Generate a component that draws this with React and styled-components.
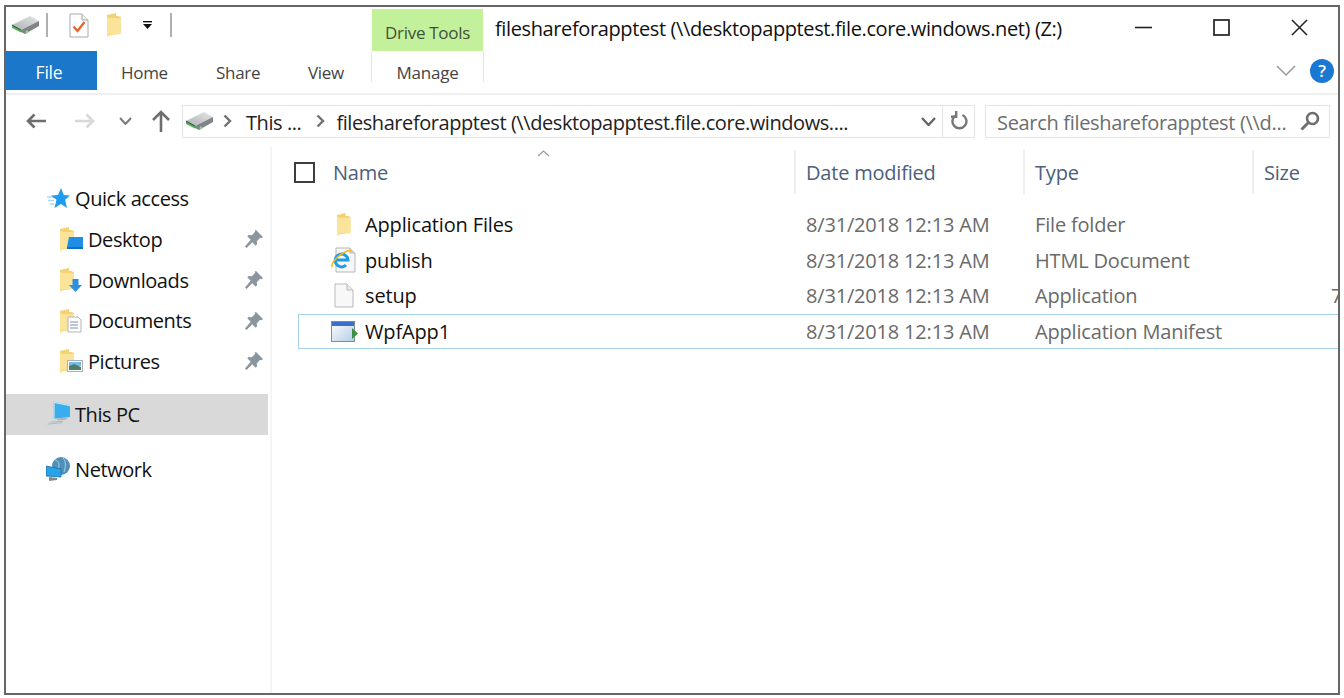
import React from 'react';
import styled, { createGlobalStyle } from 'styled-components';

const UI_FONT = '"Open Sans", "Noto Sans", "Liberation Sans", sans-serif';

const GlobalStyle = createGlobalStyle`
  html, body {
    margin: 0;
    padding: 0;
    background: #fff;
  }
  body {
    font-family: ${UI_FONT};
    overflow: hidden;
  }
`;

const Page = styled.div`
  width: 1344px;
  height: 698px;
  box-sizing: border-box;
  padding: 5px 4px 3px 4px;
  background: #fff;
`;

const Window = styled.div`
  height: 100%;
  box-sizing: border-box;
  border: 2px solid #666;
  display: flex;
  flex-direction: column;
  overflow: hidden;
  background: #fff;
`;

const TitleBar = styled.div`
  height: 44px;
  display: flex;
  flex-shrink: 0;
`;

const Qat = styled.div`
  width: 366px;
  display: flex;
  align-items: center;
  padding: 0 0 8px 6px;
  box-sizing: border-box;
`;

const QatItem = styled.span`
  display: flex;
  margin-left: ${(p) => p.$ml || 0}px;
`;

const QatSep = styled.span`
  width: 2px;
  height: 24px;
  background: #b0b0b0;
  margin-left: ${(p) => p.$ml || 0}px;
`;

const DriveToolsLabel = styled.div`
  width: 111px;
  margin-top: 2px;
  background: #c3f09b;
  color: #3f5139;
  font-size: 17px;
  letter-spacing: -0.3px;
  display: flex;
  align-items: center;
  justify-content: center;
  padding-top: 5px;
  box-sizing: border-box;
`;

const TitleText = styled.div`
  flex: 1;
  padding: 8px 0 0 12px;
  font-size: 20px;
  letter-spacing: -0.38px;
  color: #111;
  white-space: nowrap;
`;

const WinControls = styled.div`
  display: flex;
`;

const WinButton = styled.div`
  width: 78px;
  display: flex;
  align-items: center;
  justify-content: center;
  padding-bottom: 4px;
`;

const Ribbon = styled.div`
  height: 44px;
  box-sizing: border-box;
  border-bottom: 2px solid #f0f0f0;
  display: flex;
  align-items: flex-start;
  flex-shrink: 0;
`;

const FileTab = styled.div`
  width: 91px;
  height: 39px;
  box-sizing: border-box;
  padding: 2px 5px 0 0;
  background: #1a77c9;
  color: #fff;
  font-size: 17.5px;
  letter-spacing: -0.2px;
  display: flex;
  align-items: center;
  justify-content: center;
`;

const RibbonTab = styled.div`
  width: ${(p) => p.$w}px;
  height: 39px;
  box-sizing: border-box;
  padding: 3px 0 0 24px;
  color: #444;
  font-size: 17px;
  letter-spacing: -0.3px;
  display: flex;
  align-items: center;
`;

const ManageTab = styled.div`
  width: 111px;
  height: 31px;
  border-left: 1px solid #e6e6e6;
  border-right: 1px solid #e6e6e6;
  margin-left: -1px;
  color: #444;
  font-size: 17px;
  letter-spacing: -0.25px;
  text-align: center;
  line-height: 44px;
`;

const RibbonRight = styled.div`
  margin-left: auto;
  height: 39px;
  display: flex;
  align-items: center;
  gap: 14px;
  padding-right: 4px;
`;

const HelpBadge = styled.div`
  width: 24px;
  height: 24px;
  border-radius: 50%;
  background: #1a77d2;
  color: #fff;
  font-size: 17px;
  font-weight: 600;
  line-height: 24px;
  text-align: center;
`;

const NavBar = styled.div`
  height: 52px;
  display: flex;
  align-items: center;
  flex-shrink: 0;
`;

const NavButton = styled.span`
  display: flex;
  margin-left: ${(p) => p.$ml || 0}px;
`;

const AddressBox = styled.div`
  width: 793px;
  height: 33px;
  margin-left: 11px;
  box-sizing: border-box;
  border: 1px solid #e4e4e4;
  display: flex;
  align-items: center;
  padding-left: 3px;
  font-size: 20px;
  letter-spacing: -0.43px;
  color: #222;
  white-space: nowrap;
`;

const Crumb = styled.span`
  display: flex;
  margin-left: ${(p) => p.$ml || 0}px;
  padding-top: ${(p) => (p.$text ? 2 : 0)}px;
`;

const AddressEnd = styled.div`
  margin-left: auto;
  display: flex;
  align-items: center;
  height: 100%;
`;

const RefreshCell = styled.div`
  width: 31px;
  height: 100%;
  margin-left: 6px;
  border-left: 1px solid #e4e4e4;
  display: flex;
  align-items: center;
  justify-content: center;
`;

const SearchBox = styled.div`
  width: 345px;
  height: 33px;
  margin-left: 10px;
  box-sizing: border-box;
  border: 1px solid #e4e4e4;
  display: flex;
  align-items: center;
  justify-content: space-between;
  padding: 0 9px 0 11px;
  font-size: 20px;
  letter-spacing: -0.32px;
  color: #6d6d6d;
  white-space: nowrap;
`;

const SearchHint = styled.span`
  padding-top: 2px;
`;

const Body = styled.div`
  flex: 1;
  display: flex;
  min-height: 0;
`;

const Sidebar = styled.nav`
  width: 266px;
  flex-shrink: 0;
  box-sizing: border-box;
  border-right: 2px solid #f5f5f5;
  padding-top: 31.6px;
`;

const NavRow = styled.div`
  height: 40.6px;
  width: 262px;
  margin-top: ${(p) => p.$mt || 0}px;
  display: flex;
  align-items: center;
  box-sizing: border-box;
  padding-left: ${(p) => (p.$child ? 49 : 38)}px;
  padding-right: 5px;
  background: ${(p) => (p.$selected ? '#d9d9d9' : 'transparent')};
  font-size: 20px;
  letter-spacing: -0.42px;
  color: #111;
`;

const NavIcon = styled.span`
  width: ${(p) => (p.$child ? 33 : 31)}px;
  padding-right: ${(p) => (p.$child ? 5 : 5)}px;
  box-sizing: border-box;
  display: flex;
  justify-content: flex-end;
  flex-shrink: 0;
`;

const PinSlot = styled.span`
  margin-left: auto;
  display: flex;
`;

const Content = styled.main`
  flex: 1;
  min-width: 0;
  padding-top: 3px;
`;

const ColumnHeader = styled.div`
  height: 44px;
  display: grid;
  grid-template-columns: 522px 229px 229px 1fr;
  position: relative;
`;

const SortCaret = styled.span`
  position: absolute;
  left: 265px;
  top: 0;
  display: flex;
`;

const NameHead = styled.div`
  display: flex;
  align-items: center;
  padding-left: 22px;
  gap: 18px;
  color: #4c607a;
  font-size: 20px;
  letter-spacing: -0.2px;
`;

const HeadCheck = styled.span`
  width: 21px;
  height: 21px;
  box-sizing: border-box;
  border: 2px solid #3d3d3d;
`;

const HeadCell = styled.div`
  border-left: 2px solid #efefef;
  padding: 1px 0 0 10px;
  display: flex;
  align-items: center;
  color: #4c607a;
  font-size: 20px;
  letter-spacing: -0.2px;
  white-space: nowrap;
`;

const FileList = styled.div`
  margin-top: 12.700px;
  margin-left: 26px;
`;

const FileRow = styled.div`
  height: 35.7px;
  box-sizing: border-box;
  display: grid;
  grid-template-columns: 496px 229px 229px 1fr;
  align-items: center;
  border: 1px solid ${(p) => (p.$focused ? '#a8d3ef' : 'transparent')};
  border-right: none;
  white-space: nowrap;
`;

const NameCell = styled.div`
  display: flex;
  align-items: center;
  font-size: 20px;
  letter-spacing: -0.15px;
  color: #111;
`;

const FileIconSlot = styled.span`
  width: 66px;
  padding: 0 7px 0 31px;
  box-sizing: border-box;
  display: flex;
  justify-content: center;
  flex-shrink: 0;
`;

const MetaCell = styled.div`
  padding-left: 11px;
  font-size: 20px;
  letter-spacing: -0.18px;
  color: #6a6a6a;
`;

const SizeCell = styled.div`
  padding-left: 78px;
  font-size: 20px;
  color: #6a6a6a;
`;

/* ---- drawings ---- */

const DriveIcon = () => (
  <svg width="27" height="18" viewBox="0 0 27 18">
    <defs>
      <linearGradient id="driveTop" x1="0" y1="1" x2="1" y2="0">
        <stop offset="0" stopColor="#aeb2b5" />
        <stop offset="1" stopColor="#e4e5e6" />
      </linearGradient>
    </defs>
    <path d="M0 9 18 0l9 5-18 9z" fill="url(#driveTop)" />
    <path d="M9 14 27 5v5L13 18l-4-2z" fill="#7f8488" />
    <path d="M0 9l9 5v2.5L0 12z" fill="#4fb356" />
    <path d="M0 9l9 5" stroke="#3a3f42" strokeWidth="1" />
    <circle cx="15" cy="16" r="1.4" fill="#8bd88a" />
  </svg>
);

const TaskIcon = () => (
  <svg width="20" height="25" viewBox="0 0 20 25">
    <path d="M1 1h12l6 6v17H1z" fill="#fff" stroke="#a9a9a9" />
    <path d="M13 1v6h6" fill="#eee" stroke="#a9a9a9" />
    <path d="M4.5 13.5l4 4.5 7-9" fill="none" stroke="#e8622a" strokeWidth="2.2" />
  </svg>
);

const FolderShape = () => (
  <>
    <path d="M0 2 9 0v3h2l3 1v17l-11 1-3 2z" fill="#f2d272" />
    <path d="M3 5h11v16H3l-3 3V4z" fill="#fbe49a" />
  </>
);

const FolderIcon = ({ h = 24 }) => (
  <svg width={h * 0.65} height={h} viewBox="0 0 15.6 24">
    <FolderShape />
  </svg>
);

const QatDropIcon = () => (
  <svg width="11" height="8" viewBox="0 0 11 8">
    <path d="M1 .7h9" stroke="#111" strokeWidth="1.4" />
    <path d="M1 3h9L5.5 8z" fill="#111" />
  </svg>
);

const MinimizeIcon = () => (
  <svg width="17" height="3" viewBox="0 0 17 3">
    <path d="M0 1.5h17" stroke="#222" strokeWidth="1.6" />
  </svg>
);

const MaximizeIcon = () => (
  <svg width="17" height="17" viewBox="0 0 17 17">
    <rect x="1" y="1" width="15" height="15" fill="none" stroke="#222" strokeWidth="1.7" />
  </svg>
);

const CloseIcon = () => (
  <svg width="17" height="17" viewBox="0 0 17 17">
    <path d="M1 1l15 15M16 1 1 16" stroke="#222" strokeWidth="1.5" />
  </svg>
);

const Chevron = ({ w, h, color, sw = 2, up }) => (
  <svg width={w} height={h} viewBox={`0 0 ${w} ${h}`}>
    <path
      d={up ? `M1 ${h - 1}L${w / 2} 1L${w - 1} ${h - 1}` : `M1 1L${w / 2} ${h - 1}L${w - 1} 1`}
      fill="none"
      stroke={color}
      strokeWidth={sw}
    />
  </svg>
);

const CrumbArrow = () => (
  <svg width="9" height="14" viewBox="0 0 9 14">
    <path d="M1.5 1.5 7 7l-5.5 5.5" fill="none" stroke="#707070" strokeWidth="2.4" />
  </svg>
);

const HorizArrow = ({ color, flip }) => (
  <svg width="20" height="16" viewBox="0 0 20 16" style={flip ? { transform: 'scaleX(-1)' } : undefined}>
    <path d="M20 8H2M8.5 1.5 2 8l6.5 6.5" fill="none" stroke={color} strokeWidth="2.6" />
  </svg>
);

const UpArrow = () => (
  <svg width="20" height="22" viewBox="0 0 20 22">
    <path d="M10 22V2M2 10l8-8 8 8" fill="none" stroke="#6e6e6e" strokeWidth="2.6" />
  </svg>
);

const RefreshIcon = () => (
  <svg width="18" height="20" viewBox="0 0 18 20">
    <path d="M6 4.2a7 7 0 1 0 6.5-.2" fill="none" stroke="#777" strokeWidth="2.4" />
    <path d="M5 0h2.4v7H1V4.6h4z" fill="#777" />
  </svg>
);

const SearchIcon = () => (
  <svg width="20" height="20" viewBox="0 0 20 20">
    <circle cx="12.5" cy="7.5" r="5.5" fill="none" stroke="#6e6e6e" strokeWidth="2.6" />
    <path d="M8.5 11.5 1.5 18.5" stroke="#6e6e6e" strokeWidth="3" />
  </svg>
);

const StarIcon = () => (
  <svg width="23" height="22" viewBox="0 0 23 22">
    <path d="M0 9h7M1 12.500h6M3 16h4" stroke="#a9d9fa" strokeWidth="1.3" />
    <path d="M14 0l2.800 7 6.200.5-4.900 4.300L20 20l-6-4-6.500 4 2-8.200L4 7.500 11 7z" fill="#1f9bf2" />
  </svg>
);

const PinIcon = () => (
  <svg width="18" height="18" viewBox="0 0 18 18">
    <path d="M11 0l7 7-1.600 1.200-1.200-.4-3.400 3.400.3 3.100-1.400 1.400-3.400-3.400L1.500 18 0 16.500l5.700-6.800L2.300 6.300l1.400-1.400 3.100.3 3.400-3.400-.4-1.200z" fill="#8b959d" />
  </svg>
);

const FolderOverlay = ({ children }) => (
  <svg width="23" height="24" viewBox="0 0 23 24">
    <FolderShape />
    {children}
  </svg>
);

const DesktopFolder = () => (
  <FolderOverlay>
    <path d="M9 10h14v10H7z" fill="#1f8fe6" />
    <path d="M7 20h16v2H7z" fill="#0f6fc0" />
  </FolderOverlay>
);

const DownloadsFolder = () => (
  <FolderOverlay>
    <path d="M12.500 11h6v6h3.500l-6.500 7L9 17h3.500z" fill="#2e8fe0" />
  </FolderOverlay>
);

const DocumentsFolder = () => (
  <FolderOverlay>
    <path d="M8 8h10l3 3v12H8z" fill="#fff" stroke="#b5b5b5" />
    <path d="M10 13h8M10 16h8M10 19h8" stroke="#7a8fa8" />
  </FolderOverlay>
);

const PicturesFolder = () => (
  <FolderOverlay>
    <rect x="7.500" y="11.500" width="15" height="11" fill="#fff" stroke="#a8b2ba" />
    <path d="M9 13h12v4H9z" fill="#7db9e8" />
    <path d="M9 17l5-2 7 3v3H9z" fill="#4f7f6a" />
  </FolderOverlay>
);

const PcIcon = () => (
  <svg width="27" height="26" viewBox="0 0 27 26">
    <path d="M10 0l17 4v12l-17 2z" fill="#38aeee" />
    <path d="M10 0l17 4v1L11 1.500V17.900L10 18z" fill="#d5e6f0" />
    <path d="M13 18l10-1.500 1.500 2-10 1.500z" fill="#aeb6bb" />
    <path d="M0 24l10-4 13-.5-3 5L4 26z" fill="#d3d8db" />
    <path d="M4 23.500l15-1.500M7 21.500l13-1" stroke="#b2b9be" />
  </svg>
);

const NetworkIcon = () => (
  <svg width="24" height="25" viewBox="0 0 24 25">
    <circle cx="15" cy="9" r="9" fill="#4f8fb8" />
    <path d="M9 3c4 1 5 5 3 9M17 1c3 3 3 8 1 14" stroke="#a9d3ea" fill="none" />
    <path d="M0 9l15 3v8L0 19z" fill="#27a3ea" stroke="#1e6f9f" strokeWidth=".8" />
    <path d="M3 20l8 1v2l-8 1z" fill="#7c8a94" />
  </svg>
);

const IeFileIcon = () => (
  <svg width="26" height="26" viewBox="0 0 26 26">
    <path d="M5 1h14l5 5v19H5z" fill="#f7f7f7" stroke="#b5b5b5" />
    <path d="M19 1v5h5" fill="#e9e9e9" stroke="#b5b5b5" />
    <path d="M5 13h12a6.400 6.400 0 1 0-2 5.200" fill="none" stroke="#1f9ce6" strokeWidth="3" />
    <path d="M1 20c-1-4 6-12 15-16 3-1 5 0 5 1" fill="none" stroke="#f2b71d" strokeWidth="1.500" />
  </svg>
);

const BlankFileIcon = () => (
  <svg width="20" height="25" viewBox="0 0 20 25">
    <path d="M1 1h12l6 6v17H1z" fill="#f8f8f8" stroke="#b9b9b9" />
    <path d="M13 1v6h6" fill="#ececec" stroke="#b9b9b9" />
  </svg>
);

const ManifestIcon = () => (
  <svg width="27" height="21" viewBox="0 0 27 21">
    <defs>
      <linearGradient id="manifestFill" x1="0" y1="0" x2="1" y2="1">
        <stop offset="0" stopColor="#fff" />
        <stop offset="1" stopColor="#b5cbe6" />
      </linearGradient>
    </defs>
    <rect x=".5" y=".5" width="23" height="20" fill="url(#manifestFill)" stroke="#7e8b98" />
    <rect x="1" y="1" width="22" height="4" fill="#3a70c8" />
    <path d="M21 7l6 5.500L21 18z" fill="#3d9142" />
  </svg>
);

const navItems = [
  { label: 'Desktop', icon: <DesktopFolder /> },
  { label: 'Downloads', icon: <DownloadsFolder /> },
  { label: 'Documents', icon: <DocumentsFolder /> },
  { label: 'Pictures', icon: <PicturesFolder /> },
];

const files = [
  { name: 'Application Files', type: 'File folder', icon: <FolderIcon h={23} /> },
  { name: 'publish', type: 'HTML Document', icon: <IeFileIcon /> },
  { name: 'setup', type: 'Application', size: '7', icon: <BlankFileIcon /> },
  { name: 'WpfApp1', type: 'Application Manifest', icon: <ManifestIcon />, focused: true },
];

const App = () => (
  <Page>
    <GlobalStyle />
    <Window>
      <TitleBar>
        <Qat>
          <QatItem><DriveIcon /></QatItem>
          <QatSep $ml={7} />
          <QatItem $ml={21}><TaskIcon /></QatItem>
          <QatItem $ml={18}><FolderIcon /></QatItem>
          <QatItem $ml={19}><QatDropIcon /></QatItem>
          <QatSep $ml={17} />
        </Qat>
        <DriveToolsLabel>Drive Tools</DriveToolsLabel>
        <TitleText>fileshareforapptest (\\desktopapptest.file.core.windows.net) (Z:)</TitleText>
        <WinControls>
          <WinButton><MinimizeIcon /></WinButton>
          <WinButton><MaximizeIcon /></WinButton>
          <WinButton><CloseIcon /></WinButton>
        </WinControls>
      </TitleBar>

      <Ribbon>
        <FileTab>File</FileTab>
        <RibbonTab $w={95}>Home</RibbonTab>
        <RibbonTab $w={92}>Share</RibbonTab>
        <RibbonTab $w={88}>View</RibbonTab>
        <ManageTab>Manage</ManageTab>
        <RibbonRight>
          <Chevron w={20} h={11} color="#9a9a9a" sw={1.5} />
          <HelpBadge>?</HelpBadge>
        </RibbonRight>
      </Ribbon>

      <NavBar>
        <NavButton $ml={20}><HorizArrow color="#6e6e6e" /></NavButton>
        <NavButton $ml={29}><HorizArrow color="#d8d8d8" flip /></NavButton>
        <NavButton $ml={24}><Chevron w={13} h={8} color="#7a7a7a" /></NavButton>
        <NavButton $ml={19}><UpArrow /></NavButton>
        <AddressBox>
          <DriveIcon />
          <Crumb $ml={10}><CrumbArrow /></Crumb>
          <Crumb $ml={14} $text>This ...</Crumb>
          <Crumb $ml={15}><CrumbArrow /></Crumb>
          <Crumb $ml={11} $text>fileshareforapptest (\\desktopapptest.file.core.windows....</Crumb>
          <AddressEnd>
            <Chevron w={15} h={9} color="#666" sw={2.4} />
            <RefreshCell><RefreshIcon /></RefreshCell>
          </AddressEnd>
        </AddressBox>
        <SearchBox>
          <SearchHint>Search fileshareforapptest (\\d...</SearchHint>
          <SearchIcon />
        </SearchBox>
      </NavBar>

      <Body>
        <Sidebar>
          <NavRow>
            <NavIcon><StarIcon /></NavIcon>
            Quick access
          </NavRow>
          {navItems.map((item) => (
            <NavRow $child key={item.label}>
              <NavIcon $child>{item.icon}</NavIcon>
              {item.label}
              <PinSlot><PinIcon /></PinSlot>
            </NavRow>
          ))}
          <NavRow $selected $mt={12.4}>
            <NavIcon><PcIcon /></NavIcon>
            This PC
          </NavRow>
          <NavRow $mt={15}>
            <NavIcon><NetworkIcon /></NavIcon>
            Network
          </NavRow>
        </Sidebar>

        <Content>
          <ColumnHeader>
            <SortCaret><Chevron w={13} h={7} color="#9a9a9a" sw={1.2} up /></SortCaret>
            <NameHead>
              <HeadCheck />
              Name
            </NameHead>
            <HeadCell>Date modified</HeadCell>
            <HeadCell>Type</HeadCell>
            <HeadCell>Size</HeadCell>
          </ColumnHeader>
          <FileList>
            {files.map((file) => (
              <FileRow key={file.name} $focused={file.focused}>
                <NameCell>
                  <FileIconSlot>{file.icon}</FileIconSlot>
                  {file.name}
                </NameCell>
                <MetaCell>8/31/2018 12:13 AM</MetaCell>
                <MetaCell>{file.type}</MetaCell>
                <SizeCell>{file.size}</SizeCell>
              </FileRow>
            ))}
          </FileList>
        </Content>
      </Body>
    </Window>
  </Page>
);

export default App;
